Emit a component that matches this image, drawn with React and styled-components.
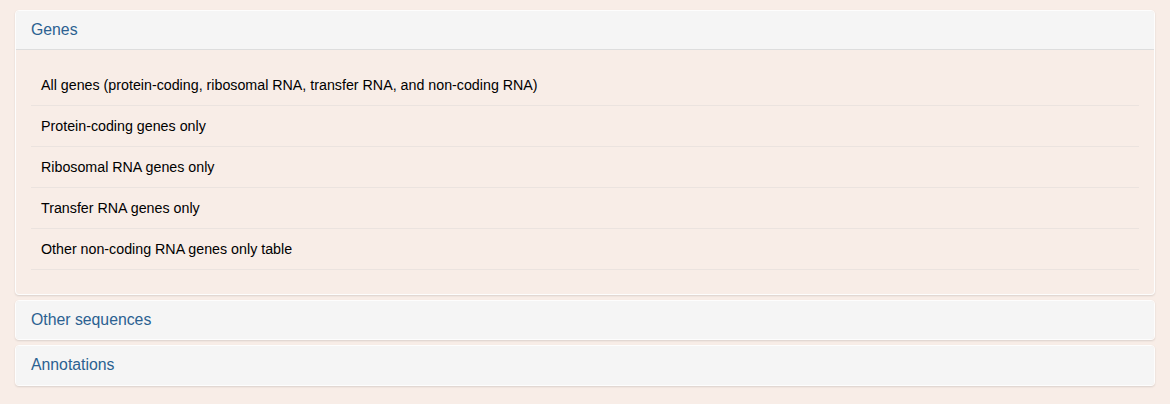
import React from 'react';
import styled, {createGlobalStyle} from 'styled-components';

const pageBg = '#f8ede7';

const GlobalStyle = createGlobalStyle`
    body {
        margin: 0;
        background-color: ${pageBg};
        font-family: "Liberation Sans", Arial, sans-serif;
        font-size: 14px;
        line-height: 1.42857;
        color: #000;
    }
`;

const Container = styled.div`
    padding: 10px 15px 20px;
`;

const PanelGroup = styled.div`
    display: flex;
    flex-direction: column;
    gap: 5px;
`;

const Panel = styled.section`
    border: 1px solid #fdfdfd;
    border-radius: 4px;
    box-shadow: 0 1px 2px rgba(0, 0, 0, 0.12);
    background-color: transparent;
    overflow: hidden;
`;

const PanelHeading = styled.div`
    background-color: #f5f5f5;
    padding: 10px 15px;
    border-bottom: 1px solid ${({$open}) => ($open ? '#dddddd' : '#f5f5f5')};
`;

const PanelTitle = styled.h4`
    margin: 0;
    font-size: 15.8px;
    font-weight: normal;
    line-height: 17.6px;
    color: #2b6191;
`;

const PanelBody = styled.div`
    padding: 15px;
`;

const List = styled.ul`
    list-style: none;
    margin: 0 0 9px;
    padding: 0;
`;

const Item = styled.li`
    padding: 10px;
    font-size: 14.25px;
    line-height: 20px;
    border-bottom: 1px solid #ebe3df;
`;

const geneLinks = [
    'All genes (protein-coding, ribosomal RNA, transfer RNA, and non-coding RNA)',
    'Protein-coding genes only',
    'Ribosomal RNA genes only',
    'Transfer RNA genes only',
    'Other non-coding RNA genes only table'
];

const App = () => (
    <Container>
        <GlobalStyle />
        <PanelGroup>
            <Panel>
                <PanelHeading $open>
                    <PanelTitle>Genes</PanelTitle>
                </PanelHeading>
                <PanelBody>
                    <List>
                        {geneLinks.map((label) => (
                            <Item key={label}>{label}</Item>
                        ))}
                    </List>
                </PanelBody>
            </Panel>
            <Panel>
                <PanelHeading>
                    <PanelTitle>Other sequences</PanelTitle>
                </PanelHeading>
            </Panel>
            <Panel>
                <PanelHeading>
                    <PanelTitle>Annotations</PanelTitle>
                </PanelHeading>
            </Panel>
        </PanelGroup>
    </Container>
);

export default App;
